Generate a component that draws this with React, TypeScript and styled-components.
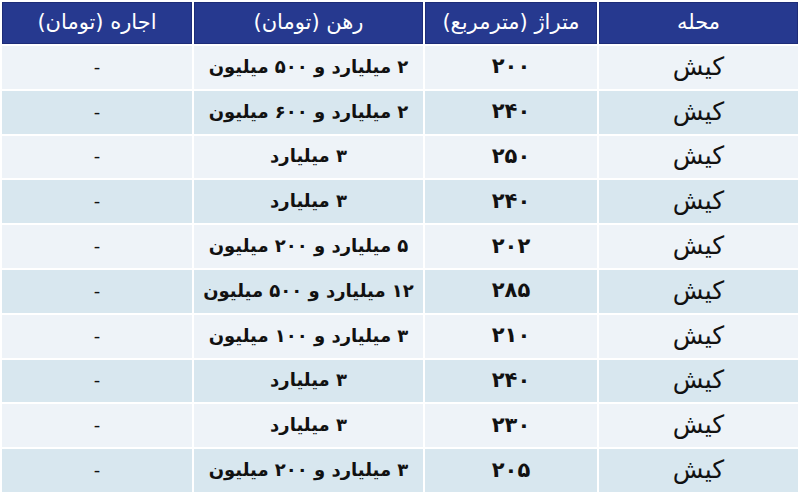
import styled, { createGlobalStyle } from "styled-components";

const GlobalStyle = createGlobalStyle`
  html, body {
    margin: 0;
    padding: 0;
    background: #ffffff;
  }
  body {
    font-family: "DejaVu Sans", "Noto Sans", sans-serif;
  }
`;

const Table = styled.div`
  direction: rtl;
  display: grid;
  grid-template-columns: 199px 172px 229px 1fr;
  grid-auto-rows: 42.8px;
  grid-template-rows: 42px;
  gap: 2px;
  padding: 2px;
  width: 800px;
  box-sizing: border-box;
  background: #ffffff;
`;

const HeadCell = styled.div`
  display: flex;
  align-items: center;
  justify-content: center;
  background: #26398f;
  box-shadow: inset 0 0 0 1px #1d2c78;
  color: #ffffff;
  font-size: 21px;
  padding-bottom: 2px;
  white-space: nowrap;
`;

type Kind = "place" | "num" | "text" | "dash";

const sizes: Record<Kind, string> = {
  place: "25px",
  num: "21px",
  text: "18px",
  dash: "18px",
};

const Cell = styled.div<{ $alt: boolean; $kind: Kind }>`
  display: flex;
  align-items: center;
  justify-content: center;
  background: ${({ $alt }) => ($alt ? "#d8e7ef" : "#eef3f8")};
  color: #111111;
  font-size: ${({ $kind }) => sizes[$kind]};
  font-weight: ${({ $kind }) => ($kind === "num" || $kind === "text" ? 700 : 400)};
  padding-bottom: 2px;
  white-space: nowrap;
`;

const headers = ["محله", "متراژ (مترمربع)", "رهن (تومان)", "اجاره (تومان)"];
const kinds: Kind[] = ["place", "num", "text", "dash"];

const rows: [string, string, string, string][] = [
  ["کیش", "۲۰۰", "۲ میلیارد و ۵۰۰ میلیون", "-"],
  ["کیش", "۲۴۰", "۲ میلیارد و ۶۰۰ میلیون", "-"],
  ["کیش", "۲۵۰", "۳ میلیارد", "-"],
  ["کیش", "۲۴۰", "۳ میلیارد", "-"],
  ["کیش", "۲۰۲", "۵ میلیارد و ۲۰۰ میلیون", "-"],
  ["کیش", "۲۸۵", "۱۲ میلیارد و ۵۰۰ میلیون", "-"],
  ["کیش", "۲۱۰", "۳ میلیارد و ۱۰۰ میلیون", "-"],
  ["کیش", "۲۴۰", "۳ میلیارد", "-"],
  ["کیش", "۲۳۰", "۳ میلیارد", "-"],
  ["کیش", "۲۰۵", "۳ میلیارد و ۲۰۰ میلیون", "-"],
];

export default function App() {
  return (
    <>
      <GlobalStyle />
      <Table>
        {headers.map((h) => (
          <HeadCell key={h}>{h}</HeadCell>
        ))}
        {rows.map((r, i) =>
          r.map((v, j) => (
            <Cell key={`${i}-${j}`} $alt={i % 2 === 1} $kind={kinds[j]}>
              {v}
            </Cell>
          ))
        )}
      </Table>
    </>
  );
}
